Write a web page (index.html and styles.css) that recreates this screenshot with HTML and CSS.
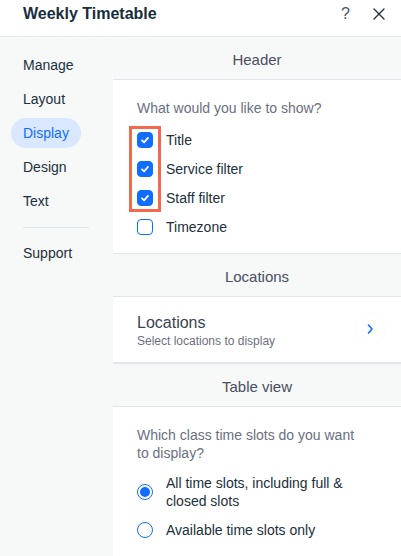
FILE: index.html
```html
<!DOCTYPE html>
<html lang="en">
<head>
    <meta charset="UTF-8">
    <meta name="viewport" content="width=device-width, initial-scale=1.0">
    <title>Weekly Timetable</title>
    <link rel="stylesheet" href="styles.css">
</head>
<body>
    <div class="panel">
        <header class="topbar">
            <h1>Weekly Timetable</h1>
            <div class="actions">
                <span class="help">?</span>
                <svg class="close" width="12" height="12" viewBox="0 0 12 12" fill="none" stroke="currentColor" stroke-width="1.4" stroke-linecap="round">
                    <line x1="1" y1="1" x2="11" y2="11"></line>
                    <line x1="11" y1="1" x2="1" y2="11"></line>
                </svg>
            </div>
        </header>

        <div class="body">
            <nav class="sidebar">
                <a class="nav-item">Manage</a>
                <a class="nav-item">Layout</a>
                <a class="nav-item active">Display</a>
                <a class="nav-item">Design</a>
                <a class="nav-item">Text</a>
                <hr class="nav-divider">
                <a class="nav-item">Support</a>
            </nav>

            <main class="content">
                <div class="band">Header</div>
                <div class="section">
                    <p class="question">What would you like to show?</p>
                    <div class="checks">
                        <span class="highlight"></span>
                        <label class="row">
                            <span class="box checked">
                                <svg width="16" height="16" viewBox="0 0 16 16" fill="none" stroke="#fff" stroke-width="1.8" stroke-linecap="round" stroke-linejoin="round"><path d="M5 8.3l2.1 2 3.9-4.4"></path></svg>
                            </span>
                            Title
                        </label>
                        <label class="row">
                            <span class="box checked">
                                <svg width="16" height="16" viewBox="0 0 16 16" fill="none" stroke="#fff" stroke-width="1.8" stroke-linecap="round" stroke-linejoin="round"><path d="M5 8.3l2.1 2 3.9-4.4"></path></svg>
                            </span>
                            Service filter
                        </label>
                        <label class="row">
                            <span class="box checked">
                                <svg width="16" height="16" viewBox="0 0 16 16" fill="none" stroke="#fff" stroke-width="1.8" stroke-linecap="round" stroke-linejoin="round"><path d="M5 8.3l2.1 2 3.9-4.4"></path></svg>
                            </span>
                            Staff filter
                        </label>
                        <label class="row">
                            <span class="box"></span>
                            Timezone
                        </label>
                    </div>
                </div>

                <div class="band">Locations</div>
                <div class="section link-row">
                    <div class="link-text">
                        <div class="link-title">Locations</div>
                        <div class="link-sub">Select locations to display</div>
                    </div>
                    <span class="chevron">
                        <svg width="8" height="12" viewBox="0 0 8 12" fill="none" stroke="#116dff" stroke-width="1.6" stroke-linecap="round" stroke-linejoin="round"><path d="M2.5 2l3.5 4-3.5 4"></path></svg>
                    </span>
                </div>

                <div class="band">Table view</div>
                <div class="section table-view">
                    <p class="question">Which class time slots do you want to display?</p>
                    <div class="radios">
                        <label class="row radio-row">
                            <span class="radio selected"></span>
                            <span class="radio-label">All time slots, including full &amp; closed slots</span>
                        </label>
                        <label class="row radio-row">
                            <span class="radio"></span>
                            <span class="radio-label">Available time slots only</span>
                        </label>
                    </div>
                </div>
            </main>
        </div>
    </div>
</body>
</html>
```

FILE: styles.css
```css
body {
    margin: 0;
    font-family: "Liberation Sans", Arial, sans-serif;
    color: #20303c;
    background-color: #ffffff;
}
.panel {
    width: 401px;
    height: 556px;
    overflow: hidden;
    display: flex;
    flex-direction: column;
}
.topbar {
    height: 36px;
    border-bottom: 1px solid #e5e9ec;
    display: flex;
    justify-content: space-between;
    align-items: flex-start;
    padding: 0 16px 0 23px;
}
.topbar h1 {
    margin: 0;
    font-size: 16px;
    font-weight: bold;
    line-height: 27px;
    color: #162d3d;
}
.actions {
    display: flex;
    align-items: center;
    gap: 23px;
    height: 27px;
}
.help {
    font-size: 16px;
    color: #4f5366;
}
.close {
    color: #20303c;
}
.body {
    flex: 1;
    display: flex;
}
.sidebar {
    width: 113px;
    background-color: #f7f8f8;
    padding-top: 13px;
    display: flex;
    flex-direction: column;
    align-items: flex-start;
}
.nav-item {
    height: 30px;
    line-height: 30px;
    padding: 0 12px;
    margin: 0 0 4px 11px;
    border-radius: 15px;
    font-size: 14px;
    color: #20303c;
}
.nav-item.active {
    background-color: #d9e7ff;
    color: #116dff;
}
.nav-divider {
    width: 66px;
    margin: 7px 0 10px 23px;
    border: none;
    border-top: 1px solid #dfe5eb;
}
.content {
    flex: 1;
    display: flex;
    flex-direction: column;
}
.band {
    height: 38px;
    padding-top: 4px;
    line-height: 38px;
    text-align: center;
    font-size: 15px;
    color: #4a4e61;
    background-color: #f7f8f8;
    border-bottom: 1px solid #dfe5eb;
}
.section {
    background-color: #ffffff;
    padding: 19px 24px 12px 24px;
    border-bottom: 1px solid #dfe5eb;
}
.question {
    margin: 0 0 8px 0;
    font-size: 14px;
    line-height: 18px;
    color: #6b6f80;
}
.checks {
    position: relative;
}
.highlight {
    position: absolute;
    left: -8px;
    top: 1px;
    width: 26px;
    height: 80px;
    border: 3px solid #f4694d;
}
.row {
    display: flex;
    align-items: center;
    gap: 13px;
    height: 29px;
    font-size: 14px;
    color: #20303c;
}
.box {
    width: 16px;
    height: 16px;
    box-sizing: border-box;
    border: 1px solid #116dff;
    border-radius: 4px;
    background-color: #ffffff;
}
.box.checked {
    background-color: #116dff;
}
.box svg {
    display: block;
    margin: -1px;
}
.link-row {
    display: flex;
    align-items: center;
    justify-content: space-between;
    padding: 16px 16px 13px 24px;
    border-bottom-width: 2px;
    border-bottom-color: #e3e7ec;
}
.link-title {
    font-size: 16px;
    line-height: 20px;
    color: #3b3f52;
}
.link-sub {
    font-size: 12px;
    line-height: 16px;
    color: #6b6f80;
}
.chevron {
    width: 30px;
    height: 30px;
    border-radius: 50%;
    background-color: #ffffff;
    box-shadow: 0 0 3px rgba(22, 45, 61, 0.04);
    display: flex;
    align-items: center;
    justify-content: center;
    margin-top: -4px;
}
.table-view {
    flex: 1;
    border-bottom: none;
    padding-right: 44px;
}
.table-view .question {
    margin-bottom: 12px;
}
.radios {
    display: flex;
    flex-direction: column;
    gap: 11px;
}
.radio-row {
    height: auto;
    line-height: 18px;
}
.radio {
    flex-shrink: 0;
    width: 16px;
    height: 16px;
    box-sizing: border-box;
    border: 1px solid #116dff;
    border-radius: 50%;
    position: relative;
}
.radio.selected::after {
    content: "";
    position: absolute;
    left: 2px;
    top: 2px;
    width: 10px;
    height: 10px;
    border-radius: 50%;
    background-color: #116dff;
}
```
